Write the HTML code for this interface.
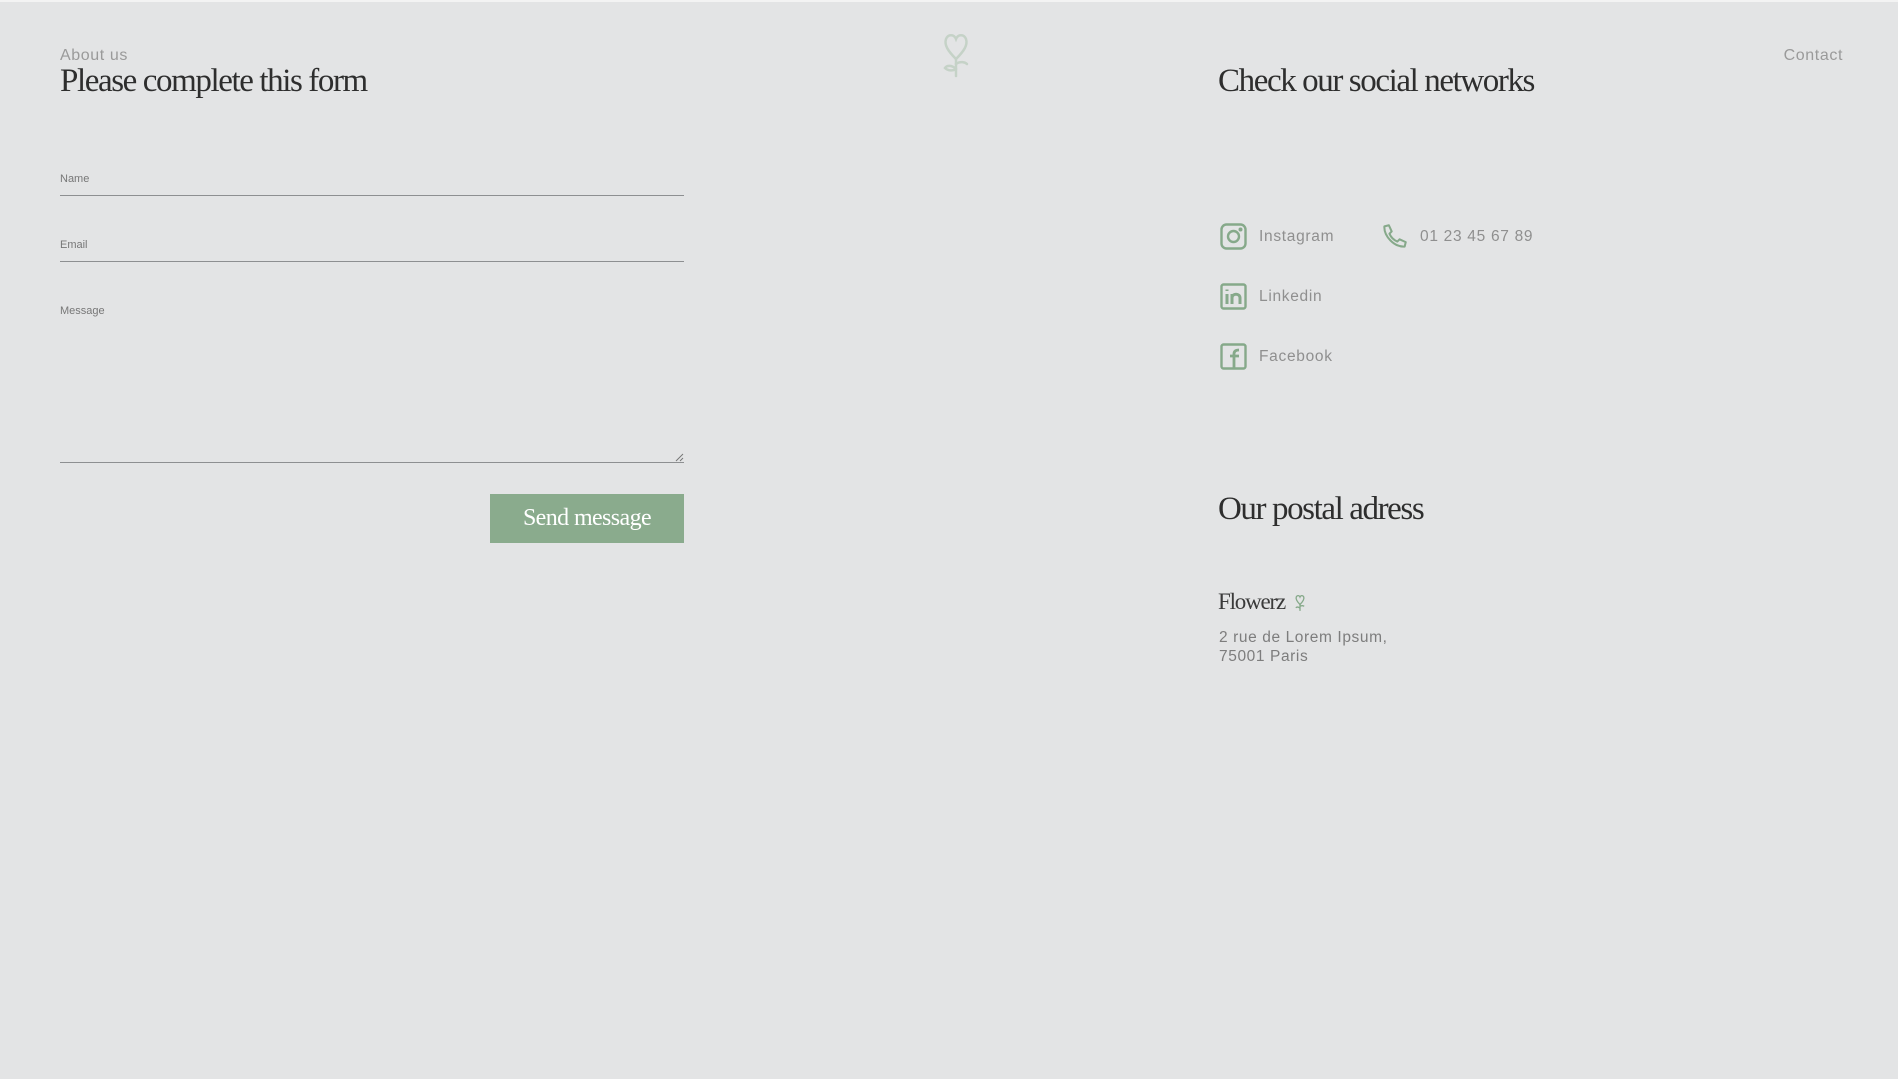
<!DOCTYPE html>
<html><head><meta charset="utf-8"><style>
html,body{margin:0;padding:0}
body{width:1898px;height:1079px;background:#e3e4e5;position:relative;overflow:hidden;font-family:"Liberation Sans",sans-serif;border-top:2px solid #f3f3f3;box-sizing:border-box}
.a{position:absolute;white-space:nowrap}
.small{color:#9a9a9a;font-size:16px;letter-spacing:.6px}
.h{font-family:"Liberation Serif",serif;font-weight:normal;color:#2e2e2e;font-size:33px;letter-spacing:-1.4px}
.lbl{font-size:11px;color:#777}
.line{position:absolute;left:60px;width:624px;height:1px;background:#8d8f91}
.soc{font-size:15.5px;color:#8f8f8f;letter-spacing:.7px}
</style></head><body>
<div class="a small" style="left:60px;top:45px">About us</div>
<div class="a h" style="left:60px;top:61px">Please complete this form</div>
<div class="a small" style="right:55px;top:45px">Contact</div>
<svg class="a" style="left:940px;top:29px" width="32" height="48" viewBox="0 0 32 48" fill="none" stroke="#c5d2c7" stroke-width="2.5" stroke-linecap="round"><path d="M16 28 C8 20 4 14 6 8 C8 3 14 3 16 8 C18 3 24 3 26 8 C28 14 24 20 16 28 Z"/><path d="M16 28 V45"/><path d="M16 38 C12 34 7 34 5 37 C8 40 13 40 16 38"/><path d="M16 33 C20 30 25 31 27 33"/></svg>

<div class="a lbl" style="left:60px;top:171px">Name</div>
<div class="line" style="top:193px"></div>
<div class="a lbl" style="left:60px;top:237px">Email</div>
<div class="line" style="top:259px"></div>
<div class="a lbl" style="left:60px;top:303px">Message</div>
<div class="line" style="top:460px"></div>
<svg class="a" style="left:674px;top:450px" width="10" height="10"><path d="M9 2 L2 9 M9 6 L6 9" stroke="#777" stroke-width="1"/></svg>
<div class="a" style="left:490px;top:492px;width:194px;height:49px;background:#8aab8d;color:#fff;font-family:'Liberation Serif',serif;font-size:24px;letter-spacing:-.6px;text-align:center;line-height:48px">Send message</div>

<div class="a h" style="left:1218px;top:61px">Check our social networks</div>

<svg class="a" style="left:1220px;top:221px" width="27" height="27" viewBox="0 0 27 27" fill="none" stroke="#86a98a" stroke-width="2.4"><rect x="1.5" y="1.5" width="24" height="24" rx="5"/><circle cx="13.5" cy="13.5" r="5.5"/><circle cx="20.5" cy="6.5" r=".8" fill="#86a98a"/></svg>
<div class="a soc" style="left:1259px;top:226px">Instagram</div>
<svg class="a" style="left:1381px;top:221px" width="27" height="27" viewBox="0 0 24 24" fill="none" stroke="#86a98a" stroke-width="1.8" stroke-linejoin="round"><path d="M3 3 L7 2 L9.5 7.5 L7.5 9.5 C9 13 11 15 14.5 16.5 L16.5 14.5 L22 17 L21 21 C12 21.5 2.5 12 3 3 Z"/></svg>
<div class="a soc" style="left:1420px;top:226px">01 23 45 67 89</div>

<svg class="a" style="left:1220px;top:281px" width="27" height="27" viewBox="0 0 27 27" fill="none" stroke="#86a98a" stroke-width="2.4"><rect x="1.5" y="1.5" width="24" height="24" rx="2"/><path d="M7 11 V21 M7 6.5 V8" stroke-width="3"/><path d="M12 21 V11 M12 15 C12 10 20 10 20 15 V21" stroke-width="3"/></svg>
<div class="a soc" style="left:1259px;top:286px">Linkedin</div>

<svg class="a" style="left:1220px;top:341px" width="27" height="27" viewBox="0 0 27 27" fill="none" stroke="#86a98a" stroke-width="2.4"><rect x="1.5" y="1.5" width="24" height="24" rx="2"/><path d="M14 26 V11 C14 8 16 7 19 7 M10 13 H19" stroke-width="2.8"/></svg>
<div class="a soc" style="left:1259px;top:346px">Facebook</div>

<div class="a h" style="left:1218px;top:489px">Our postal adress</div>
<div class="a" style="left:1218px;top:587px;font-family:'Liberation Serif',serif;font-size:23px;color:#3a3a3a;letter-spacing:-1.2px">Flowerz</div>
<svg class="a" style="left:1294px;top:592px" width="12" height="18" viewBox="0 0 32 48" fill="none" stroke="#86a98a" stroke-width="3.5"><path d="M16 28 C8 20 4 14 6 8 C8 3 14 3 16 8 C18 3 24 3 26 8 C28 14 24 20 16 28 Z"/><path d="M16 28 V45 M16 38 C12 34 7 34 5 37 M16 33 C20 30 25 31 27 33"/></svg>
<div class="a" style="left:1219px;top:626px;font-size:15.5px;color:#7d7d7d;line-height:19px;letter-spacing:.6px">2 rue de Lorem Ipsum,<br>75001 Paris</div>
</body></html>
